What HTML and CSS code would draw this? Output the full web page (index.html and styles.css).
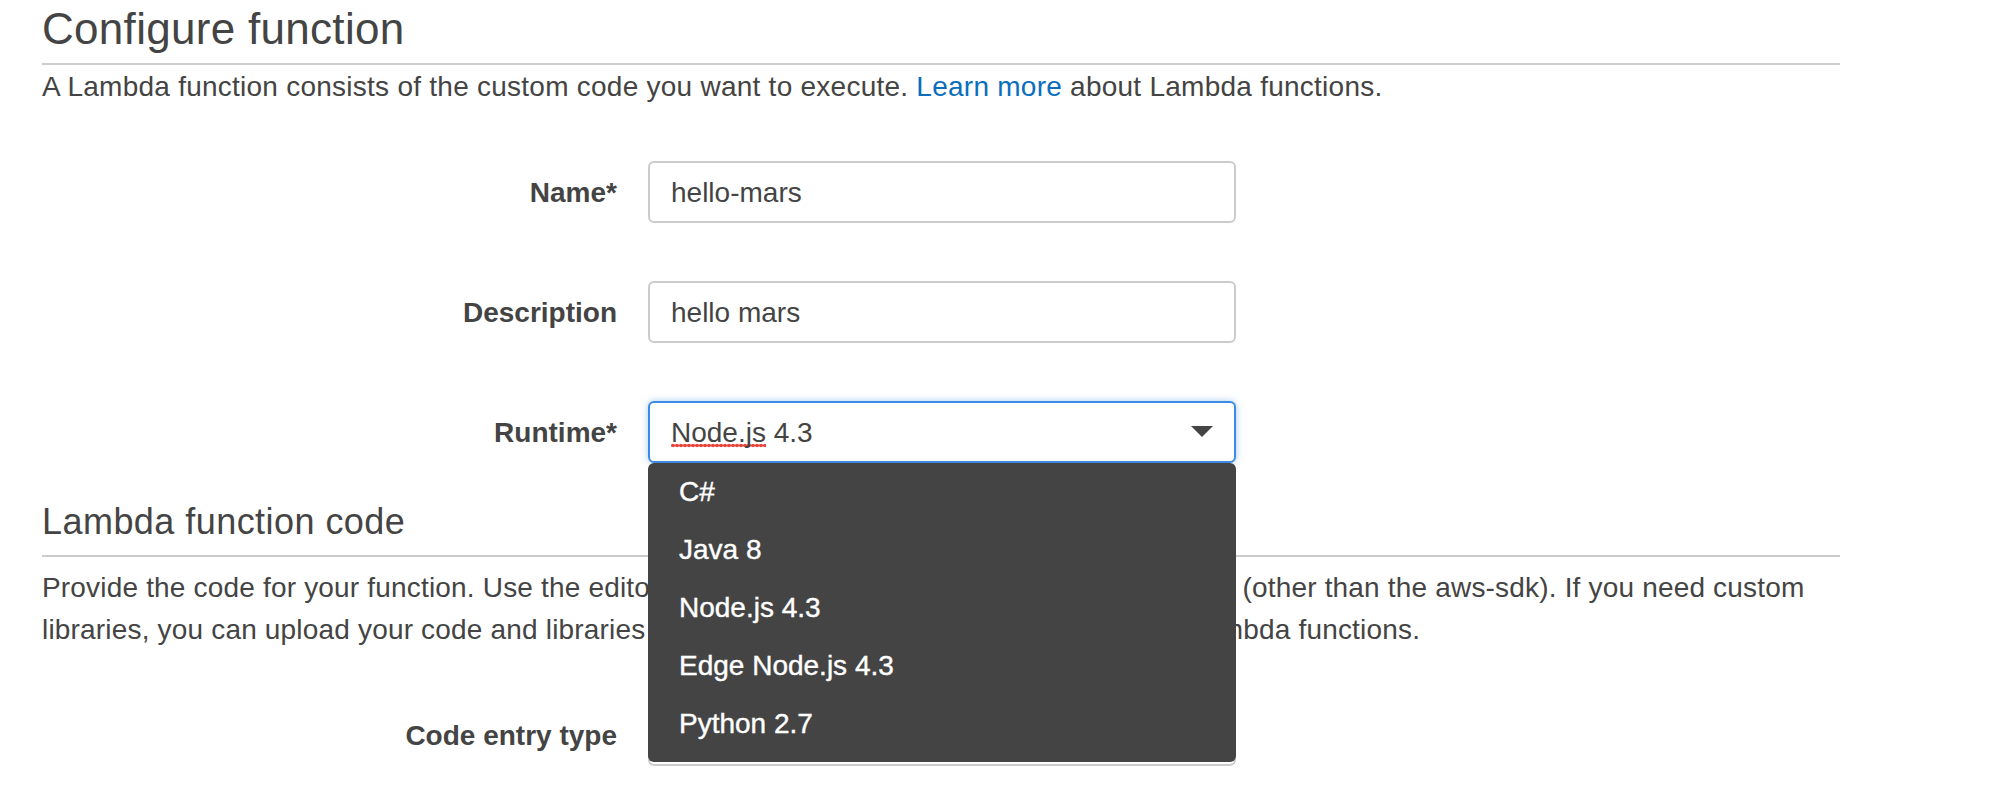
FILE: index.html
```html
<!DOCTYPE html>
<html lang="en">
<head>
<meta charset="utf-8">
<title>Configure function</title>
<link rel="stylesheet" href="styles.css">
</head>
<body>
<div class="page">
  <section class="section">
    <h1 class="title">Configure function</h1>
    <p class="lead">A Lambda function consists of the custom code you want to execute. <a class="link" href="#">Learn more</a> about Lambda functions.</p>
    <div class="form form-top">
      <div class="row">
        <label class="label">Name*</label>
        <div class="field"><div class="input">hello-mars</div></div>
      </div>
      <div class="row">
        <label class="label">Description</label>
        <div class="field"><div class="input">hello mars</div></div>
      </div>
      <div class="row">
        <label class="label">Runtime*</label>
        <div class="field field-open">
          <div class="input select focused">
            <span class="value"><span class="spell">Node.js</span> 4.3</span>
            <svg class="caret" width="22" height="11" viewBox="0 0 22 11"><path d="M0 0 H22 L11 11 Z" fill="#444"/></svg>
          </div>
          <ul class="menu">
            <li class="option">C#</li>
            <li class="option">Java 8</li>
            <li class="option">Node.js 4.3</li>
            <li class="option">Edge Node.js 4.3</li>
            <li class="option">Python 2.7</li>
          </ul>
        </div>
      </div>
    </div>
  </section>
  <section class="section">
    <h2 class="subtitle">Lambda function code</h2>
    <p class="body">Provide the code for your function. Use the editor if your code does not require custom libraries (other than the aws-sdk). If you need custom libraries, you can upload your code and libraries as a .ZIP file. <a class="link" href="#">Learn more</a> about deploying Lambda functions.</p>
    <div class="form form-code">
      <div class="row">
        <label class="label">Code entry type</label>
        <div class="field"><div class="input select"></div></div>
      </div>
    </div>
  </section>
</div>
</body>
</html>
```
FILE: styles.css
```css
* { box-sizing: border-box; }
html, body { margin: 0; padding: 0; background: #fff; }
body {
  font-family: "Liberation Sans", Arial, Helvetica, sans-serif;
  color: #444;
  overflow: hidden;
}
.page {
  padding-left: 42px;
  width: 1840px;
}
.title {
  margin: 0;
  padding: 3px 0 8px;
  font-size: 44px;
  line-height: 52px;
  font-weight: normal;
  letter-spacing: 0.3px;
  border-bottom: 2px solid #cccccc;
}
.lead, .body {
  margin: 0;
  font-size: 28px;
  line-height: 42px;
}
.lead { margin-top: 1px; letter-spacing: 0.25px; }
.link { color: #0a6ebd; text-decoration: none; }
.form { display: flex; flex-direction: column; gap: 58px; }
.form-top { margin-top: 53px; }
.form-code { margin-top: 53px; }
.row {
  display: grid;
  grid-template-columns: 575px 588px;
  column-gap: 31px;
  height: 62px;
}
.label {
  text-align: right;
  font-weight: bold;
  font-size: 28px;
  line-height: 60px;
  padding-top: 2px;
}
.field { position: relative; }
.input {
  height: 62px;
  border: 2px solid #cccccc;
  border-radius: 6px;
  padding: 2px 21px 0;
  display: flex;
  align-items: center;
  font-size: 28px;
  line-height: 32px;
  background: #fff;
}
.focused {
  border-color: #3b8be2;
  box-shadow: 0 0 7px rgba(59, 139, 226, 0.45);
}
.value { flex: 1; }
.spell {
  background: radial-gradient(circle, #e8453c 1.6px, transparent 2.1px) repeat-x 0 100% / 4px 5px;
}
.caret { margin-top: -3px; }
.menu {
  position: absolute;
  top: 100%;
  left: 0;
  right: 0;
  margin: 0;
  padding: 0 0 9px;
  list-style: none;
  background: #444444;
  border-radius: 6px;
  z-index: 5;
}
.option {
  height: 58px;
  line-height: 58px;
  padding-left: 31px;
  color: #fff;
  font-size: 28px;
  -webkit-text-stroke: 0.4px #fff;
}
.subtitle {
  margin: 37px 0 0;
  padding: 0 0 11px;
  font-size: 36px;
  line-height: 44px;
  font-weight: normal;
  letter-spacing: 0.45px;
  border-bottom: 2px solid #cccccc;
}
.body { margin-top: 10px; letter-spacing: 0.18px; }
```
